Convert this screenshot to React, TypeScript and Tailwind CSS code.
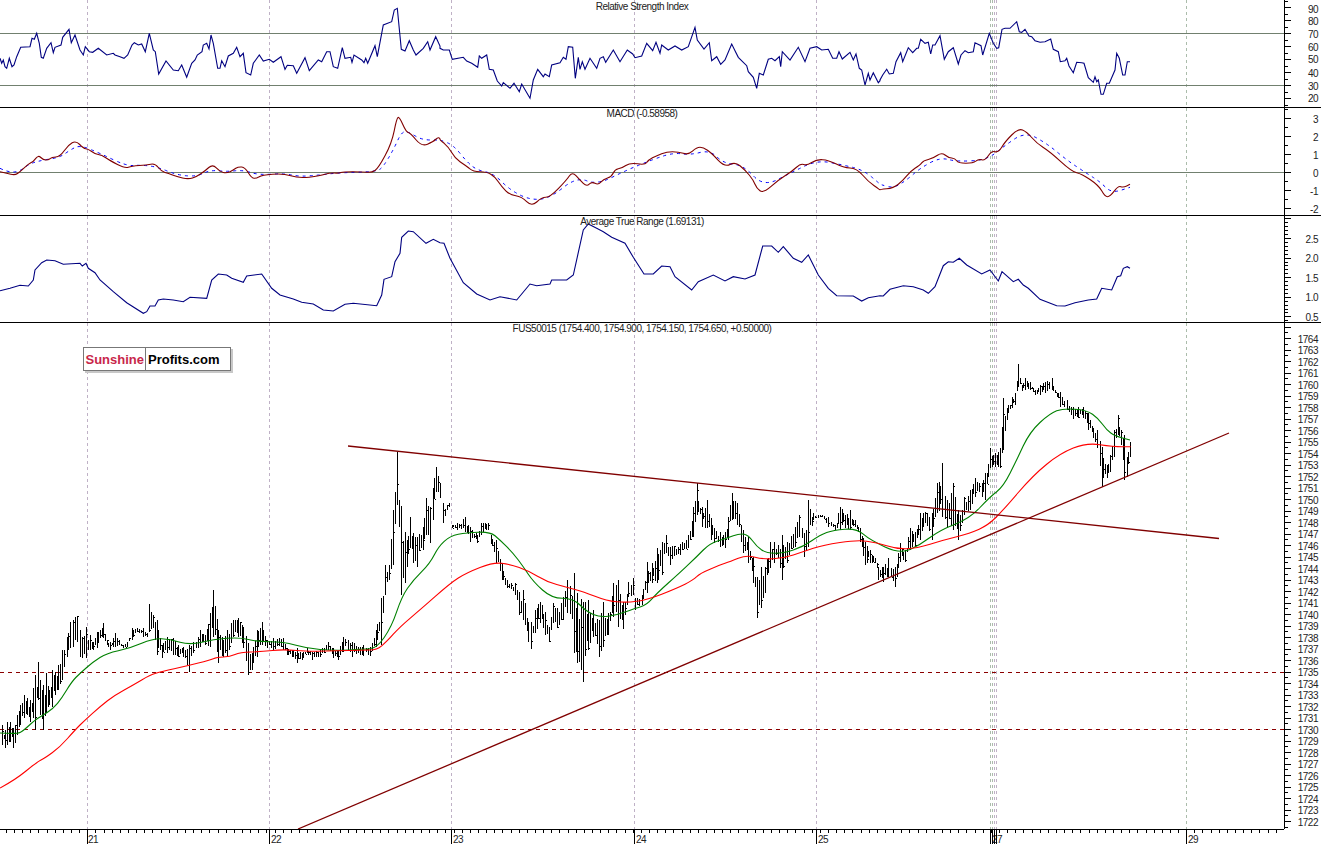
type Pt = [number, number];
type Bar = [number, number, number];

// traced from the chart at 3x, so every series is (offset + value / 3)
const toPts = (ox: number, oy: number, raw: number[]): Pt[] => {
  const out: Pt[] = [];
  for (let i = 0; i < raw.length; i += 2) out.push([ox + raw[i] / 3, oy + raw[i + 1] / 3]);
  return out;
};
const toLine = (pts: Pt[]) => pts.map((p) => `${p[0].toFixed(1)},${p[1].toFixed(1)}`).join(" ");
// rounds the corners of the slower series, each point becomes a quadratic control
const toCurve = (pts: Pt[]) => {
  let d = `M${pts[0][0].toFixed(1)} ${pts[0][1].toFixed(1)}`;
  for (let i = 1; i < pts.length - 1; i++) {
    const mx = (pts[i][0] + pts[i + 1][0]) / 2;
    const my = (pts[i][1] + pts[i + 1][1]) / 2;
    d += `Q${pts[i][0].toFixed(1)} ${pts[i][1].toFixed(1)} ${mx.toFixed(1)} ${my.toFixed(1)}`;
  }
  const last = pts[pts.length - 1];
  return `${d}L${last[0].toFixed(1)} ${last[1].toFixed(1)}`;
};
const toBars = (ox: number, oy: number, raw: number[]): Bar[] => {
  const out: Bar[] = [];
  for (let i = 0; i < raw.length; i += 3) out.push([ox + raw[i] / 3, oy + raw[i + 1] / 3, oy + raw[i + 2] / 3]);
  return out;
};

const rsi = toLine([
  ...toPts(0, 0, [0,175,5,190,10,180,15,200,20,205,28,175,36,200,42,195,50,170,62,142,90,140,96,115,103,118,110,100,118,130,124,172,130,175,140,145,153,128,160,158,165,142,183,135,188,112,207,88,214,128,225,105,240,150,250,165,256,140,268,155,278,157,295,145,320,165,340,160,345,165,360,170,372,175,383,165,396,135,403,128,415,135,425,132,436,155,448,100,460,150,466,155,476,222,498,183,520,210,535,212,545,195,560,232,575,190,585,180,592,165,606,155,610,135,620,130,627,147,633,105,640,130,653,205,660,205,665,182,675,200,685,168,700,160,710,142,720,170,730,160,738,218,752,225,760,190,778,165,790,183,808,178,820,187,843,170,855,208,862,196,880,197,890,220,915,173,928,212,955,180,965,185,980,155,990,155,1000,200,1013,205,1027,143,1035,175,1052,172,1056,187,1062,165,1085,180,1092,188,1097,175,1103,190,1125,137,1132,170,1150,75,1175,65,1183,30,1192,25,1204,148,1215,153,1228,122,1240,150,1248,165,1270,145,1283,125,1290,150,1307,110,1320,138]),
  ...toPts(440, 0, [0,145,10,150,28,150,37,178,70,172,80,183,95,190,113,202,118,168,125,175,140,165,148,208,160,210,172,243,185,258,190,248,210,265,222,250,238,275,245,252,270,295,280,240,293,208,310,230,315,222,328,230,335,195,360,188,370,172,378,178,385,140,398,142,406,235,415,172,420,208,427,185,435,208,450,175,470,205,480,175,490,170,497,187,520,150,540,185,562,150,578,162,585,173,605,168,620,130,638,152,648,127,660,160,665,135,685,150,705,138,725,150,745,140,765,82,772,120,792,147,808,128,815,182,830,170,842,193,855,180,875,132,885,152,895,172,920,197,925,215,940,232,950,265,958,220,970,225,985,178,995,175,1005,182,1018,170,1022,200,1027,155,1050,180,1075,142,1095,185,1110,145,1130,140,1145,150,1165,148,1178,175,1190,175,1197,155,1207,177,1230,157,1240,180,1248,162,1258,205,1265,210,1275,255,1285,220,1290,240,1300,218,1315,248,1320,242]),
  ...toPts(880, 0, [0,240,8,225,20,208,28,222,40,220,48,185,62,158,68,185,85,143,98,158,110,145,115,145,122,118,135,130,145,127,152,162,158,135,165,135,180,107,193,178,205,155,220,143,235,192,243,165,255,152,265,158,280,155,285,128,303,137,308,165,328,100,340,130,350,145,356,143,366,88,375,85,390,85,410,65,418,95,425,97,435,88,447,108,455,110,465,122,480,127,495,125,512,117,520,148,535,155,541,185,555,182,560,175,567,198,580,218,590,187,605,188,612,190,625,233,640,247,645,230,650,245,655,240,663,283,670,283,680,250,688,250,705,210,710,160,718,175,728,225,735,225,742,185,750,185]),
]);

const macd = toCurve([
  ...toPts(0, 0, [0,515,20,520,45,526,60,515,85,492,100,485,115,465,130,480,145,480,155,472,180,470,205,435,228,422,250,445,265,447,285,462,305,465,330,482,375,505,395,498,440,495,465,490,485,515,505,520,530,530,565,538,590,530,615,513,638,492,660,515,680,520,700,510,715,500,735,502,755,535,770,535,785,525,850,520,895,535,960,528,990,518,1015,520,1030,515,1085,515,1115,518,1135,505,1175,430,1190,355,1198,350,1218,395,1232,400,1265,440,1300,425,1313,412,1320,415]),
  ...toPts(440, 0, [0,420,25,440,45,475,75,495,100,515,140,515,165,530,185,560,210,585,245,590,275,620,305,592,330,592,380,540,397,515,420,540,440,560,455,545,475,555,490,538,515,530,525,508,545,505,570,488,615,495,625,480,650,467,680,455,715,455,745,465,770,442,790,442,815,460,855,502,885,485,915,510,940,540,950,565,970,580,1015,540,1055,515,1082,490,1100,497,1130,478,1165,480,1210,503,1250,505,1285,545,1320,570]),
  ...toPts(880, 0, [0,568,40,565,70,540,90,515,120,495,130,482,160,475,185,457,205,473,225,475,235,490,280,490,295,477,315,482,335,452,355,458,375,425,415,385,440,395,470,430,510,455,575,515,605,522,655,555,675,590,690,590,715,557,730,563,750,553]),
]);

const macdSignal = toCurve([
  ...toPts(0, 0, [0,505,20,515,55,517,90,490,130,480,180,472,210,450,240,435,300,460,380,498,420,495,470,500,530,525,590,530,630,510,680,515,730,510,775,525,850,520,900,530,960,525,1020,518,1130,515,1150,500,1180,450,1205,395,1225,395,1265,420,1320,420]),
  ...toPts(440, 0, [0,420,40,435,80,485,110,510,160,520,210,570,270,600,330,595,410,530,470,555,560,510,640,478,700,458,750,465,810,450,850,490,910,495,970,560,1050,520,1130,480,1210,495,1270,510,1320,552]),
  ...toPts(880, 0, [0,553,40,565,80,540,120,505,180,472,230,485,320,480,370,440,435,395,500,430,560,480,620,520,660,545,695,580,750,562]),
]);

const atr = toLine([
  ...toPts(0, 0, [0,872,30,865,60,856,85,858,100,840,105,810,125,788,140,780,165,782,190,793,240,790,247,798,258,790,265,805,285,818,300,840,340,875,380,908,430,940,440,935,450,918,465,918,475,900,490,897,520,900,550,905,570,892,620,895,635,840,655,822,680,825,695,835,730,847,740,828,785,822,815,865,840,885,880,897,905,907,940,912,970,930,1000,933,1035,913,1060,910,1130,917,1145,885,1152,838,1175,830,1185,785,1200,760,1205,712,1225,693,1240,695,1278,730,1300,718,1320,728]),
  ...toPts(440, 0, [0,728,12,730,30,775,70,848,110,882,150,900,180,890,230,900,270,852,290,857,330,852,335,840,380,840,400,825,430,690,445,672,470,685,490,695,515,712,555,730,580,772,612,822,640,822,665,798,690,800,705,830,755,870,775,845,820,825,855,843,880,830,915,837,945,825,968,738,995,738,1015,757,1030,740,1060,775,1085,787,1105,765,1135,825,1165,865,1190,887,1240,888,1265,903,1285,893,1320,887]),
  ...toPts(880, 0, [0,887,10,888,30,868,70,857,100,860,130,870,145,880,165,860,190,797,205,785,220,787,238,775,260,795,305,822,330,810,355,843,366,815,400,845,415,838,430,855,445,865,480,898,530,917,555,918,585,908,625,900,650,897,665,865,695,870,712,830,722,827,730,805,742,800,750,805]),
]);

const maRed = toCurve([
  [0,788],[15,780],[37,762],[45,758],[60,747],[75,730],
  ...toPts(0, 320, [255,1200,300,1160,345,1125,400,1095,450,1065,485,1055,560,1038,630,1020,650,1012,690,1010,720,997,785,995,850,988,930,995,1090,990]),
  ...toPts(360, 420, [50,690,80,665,120,620,180,570,270,490,320,458,400,427,450,433,505,452,560,485,620,502,670,515,740,543,800,548,860,540,950,505,1000,480,1020,460,1080,435,1110,425,1160,405]),
  ...toPts(740, 350, [70,628,130,625,190,605,250,585,350,570,410,577,470,597,530,595,610,570,690,550,745,525,790,480,880,375,960,310,1040,278,1120,290,1172,290]),
]);

const maGreen = toCurve([
  [0,733],[17,734],[23,731],[35,720],
  ...toPts(0, 320, [125,1188,160,1165,185,1135,215,1085,240,1060,280,1025,320,1000,390,985,460,955,510,958,570,975,640,958,720,952,770,965,850,965,920,985,1000,992,1090,988]),
  ...toPts(360, 420, [50,685,95,620,125,530,160,480,210,430,235,380,270,348,320,338,390,335,420,360,460,400,490,440,520,485,575,535,640,535,680,575,720,592,770,585,825,565,860,555,890,520,960,458,1010,410,1050,370,1100,355,1140,340,1165,345]),
  ...toPts(740, 350, [50,590,80,610,130,610,190,590,240,555,280,540,350,535,390,570,480,612,540,585,600,540,690,505,750,440,790,410,830,330,870,245,930,190,970,175,1040,180,1075,205,1100,240,1125,258,1170,270]),
]);

const keyBars: Bar[] = [
  [2,725,745],[5,730,748],[7,722,745],[10,722,742],[13,728,748],[15,725,743],[17,715,735],[20,705,725],[24,695,718],[27,698,715],[30,700,722],[33,688,718],[35,675,730],[38,662,700],[40,680,715],[43,685,730],[46,673,712],[49,690,705],[52,670,707],[55,672,695],[58,665,690],[62,650,680],
  ...toBars(0, 320, [200,950,1010,210,905,985,218,900,980,225,890,960,232,888,965,240,930,1010,245,950,1015,258,920,1015,270,945,990,280,965,990,290,935,985,300,930,955,310,910,955,320,960,975,330,965,990,345,940,980,357,960,975,368,975,985,380,965,980,395,925,960,410,925,935,430,925,950,440,940,950,448,853,935,458,885,925,470,900,1005,485,975,1015,500,950,1000,520,955,1005,535,975,1010,550,980,1010,567,975,1055,580,965,1000,600,930,980,615,945,975,630,880,980,640,810,950,655,930,1030,670,960,1010,680,930,1010,700,900,950,715,895,950,730,920,985,743,970,1065,755,1000,1050,770,930,1010,785,905,975,800,960,985,820,955,990,850,955,990,860,985,1005,875,990,1010,890,985,1030,905,1000,1020,920,985,1000,935,995,1020,960,990,1010,985,965,990,1000,985,1015,1015,990,1020,1030,950,990,1055,965,1010,1080,980,1005]),
  ...toBars(360, 420, [10,675,708,30,680,708,47,630,680,62,535,675,75,435,525,88,435,480,100,270,435,112,95,255,122,258,525,135,335,490,150,290,385,160,340,430,172,350,440,188,320,390,198,235,345,210,260,370,218,205,300,228,140,215,240,190,235,248,250,310,268,250,262,275,315,325,290,310,330,315,290,335,330,320,365,352,345,368,362,308,345,385,308,330,392,345,372,408,360,430,425,428,480,440,480,505,465,490,525,478,515,585,490,510,600,505,605,665,513,605,688,525,570,640,540,545,610,555,575,645,568,620,665,578,550,610,592,565,625,610,530,600,622,480,578,642,460,700,652,520,730,670,545,785,685,540,690,700,570,650,716,600,710,730,545,680,745,580,645,760,490,590,775,480,620,790,545,628,805,485,530,818,475,525,825,535,570,845,525,555,860,425,520,875,430,490,890,385,490,905,365,465,918,345,400,930,380,435,960,372,405,985,345,385,1000,260,350,1010,190,285,1025,260,320,1040,240,325,1052,295,360,1062,325,370,1080,335,380,1095,335,385,1105,290,360,1115,218,300,1130,250,315,1150,330,400,1165,350,430,1180,410,490,1192,470,595]),
  ...toBars(740, 350, [62,650,775,75,650,730,90,575,655,102,575,640,115,585,625,125,555,690,140,575,640,165,530,590,178,495,560,192,550,620,205,450,590,220,490,510,245,495,500,265,500,530,285,525,540,300,470,540,315,495,535,330,480,540,345,510,530,360,535,575,375,575,645,390,600,640,405,625,640,415,650,690,430,650,695,445,625,680,465,650,710,480,580,635,495,600,635,510,535,600,525,545,590,540,490,570,555,485,520,575,490,570,590,400,490,607,340,500,620,450,535,640,400,540,655,480,570,672,440,495,690,420,480,705,385,440,725,400,440,735,370,450,750,295,355,765,310,350,780,295,355,790,145,300,800,175,210,815,140,175,825,130,165,835,42,110,845,105,122,855,85,120,870,95,120,885,120,135,900,105,135,915,95,130,935,85,120,945,120,130,960,125,170,980,150,180,1000,170,208,1015,170,205,1030,170,205,1045,190,240,1060,235,265,1072,240,295,1085,290,410,1100,345,385,1110,315,365,1122,240,320,1133,195,255,1143,240,285,1152,255,390,1160,320,380,1170,275,320]),
];

const noise = (i: number) => {
  const v = Math.sin(i * 12.9898) * 43758.5453;
  return v - Math.floor(v);
};

// key bars are exact, the 15 minute bars in between are filled in from their neighbours
const buildBarsPath = () => {
  const all: Bar[] = [];
  keyBars.forEach((b, i) => {
    all.push(b);
    const next = keyBars[i + 1];
    if (!next) return;
    const gap = next[0] - b[0];
    const extra = Math.max(0, Math.round(gap / 2) - 1);
    for (let k = 1; k <= extra; k++) {
      const t = k / (extra + 1);
      const hi = b[1] + (next[1] - b[1]) * t;
      const lo = b[2] + (next[2] - b[2]) * t;
      const cut = (lo - hi) * 0.4;
      all.push([b[0] + gap * t, hi + cut * noise(i + k), lo - cut * noise(i * 3 + k)]);
    }
  });
  return all
    .map(([x, hi, lo], i) => {
      const px = Math.round(x);
      const stem = `M${px + 0.5} ${Math.round(hi)}V${Math.round(lo)}`;
      if (i % 2) return stem;
      const close = Math.round(hi + (lo - hi) * noise(i + 19));
      return `${stem}M${px + 1} ${close + 0.5}H${px + 2}`;
    })
    .join("");
};
const barsPath = buildBarsPath();

const gridLines = [
  { x: 87.5, green: false },
  { x: 269.5, green: false },
  { x: 451.5, green: false },
  { x: 634.5, green: false },
  { x: 816.5, green: false },
  { x: 990.5, green: true },
  { x: 992.5, green: true },
  { x: 994.5, green: false },
  { x: 996.5, green: false },
  { x: 1186.5, green: true },
];

type Tick = { y: number; major?: boolean; label?: string; labelY?: number };

function Pane({
  top,
  height,
  title,
  titleClass,
  ticks,
  children,
}: {
  top: number;
  height: number;
  title: string;
  titleClass?: string;
  ticks: Tick[];
  children: React.ReactNode;
}) {
  return (
    <div className="flex" style={{ height }}>
      <div className="relative w-[1284px]">
        <svg width="1284" height={height} viewBox={`0 ${top} 1284 ${height}`} className="block">
          {gridLines.map((g) => (
            <line
              key={g.x}
              x1={g.x}
              x2={g.x}
              y1={top}
              y2={top + height}
              stroke={g.green ? "#abbcab" : "#bfb1c6"}
              strokeDasharray="3 3"
              shapeRendering="crispEdges"
            />
          ))}
          {children}
        </svg>
        <div className={`absolute inset-x-0 top-0 flex justify-center text-[10px] leading-[12px] tracking-[-0.5px] text-[#222] ${titleClass ?? ""}`}>
          {title}
        </div>
      </div>
      <svg width="37" height={height} viewBox={`1284 ${top} 37 ${height}`} className="block">
        <line x1="1284.5" x2="1284.5" y1={top} y2={top + height} stroke="#000" shapeRendering="crispEdges" />
        {ticks.map((t, i) => (
          <g key={i}>
            <line
              x1="1285"
              x2={t.major ? 1291 : 1288}
              y1={Math.round(t.y) + 0.5}
              y2={Math.round(t.y) + 0.5}
              stroke="#000"
              shapeRendering="crispEdges"
            />
            {t.label && (
              <text x="1318" y={(t.labelY ?? t.y) + 3.5} textAnchor="end" className="fill-[#222] text-[10px] tracking-[-0.5px]">
                {t.label}
              </text>
            )}
          </g>
        ))}
      </svg>
    </div>
  );
}

const rsiLabels: Record<number, number> = { 90: 9.3, 80: 21.7, 70: 34.3, 60: 47.3, 50: 59.7, 40: 73.3, 30: 86.3, 20: 98.7 };
const rsiTicks: Tick[] = [];
for (let v = 95; v >= 15; v -= 5) {
  const major = v % 10 === 0;
  rsiTicks.push({ y: 33 + (70 - v) * 1.3, major, label: major ? String(v) : undefined, labelY: rsiLabels[v] });
}

const macdTicks: Tick[] = [];
for (let v = 3.5; v >= -2.5; v -= 0.5) {
  const major = Number.isInteger(v);
  macdTicks.push({ y: 172 + -v * 18, major, label: major ? String(v) : undefined, labelY: 173.3 - v * 18 });
}

const atrTicks: Tick[] = [];
for (let i = 30; i >= 4; i--) {
  const v = i / 10;
  const major = i % 5 === 0;
  atrTicks.push({
    y: 238 + (2.5 - v) * 39.2,
    major,
    label: major && i < 30 ? v.toFixed(1) : undefined,
    labelY: 239 + (2.5 - v) * 39.2,
  });
}

const mainTicks: Tick[] = [];
for (let v = 1765; v >= 1721.5; v -= 0.5) {
  const major = Number.isInteger(v);
  const y = 729 + (1730 - v) * 11.5;
  mainTicks.push({
    y,
    major,
    label: major && v <= 1764 && v >= 1722 ? String(v) : undefined,
    labelY: y + 1,
  });
}

const days = [
  { x: 87, label: "21", labelX: 88 },
  { x: 269, label: "22", labelX: 271 },
  { x: 451, label: "23", labelX: 453 },
  { x: 634, label: "24", labelX: 636 },
  { x: 816, label: "25", labelX: 818 },
  { x: 990, label: "27", labelX: 992 },
  { x: 1186, label: "29", labelX: 1188 },
];

function dateTicks() {
  const out: number[] = [];
  for (let x = 87.3 - 8.14 * 10; x < 1284; x += 8.14) out.push(Math.round(x));
  return out;
}

function DateAxis() {
  return (
    <div className="h-[15px] w-[1284px]">
      <svg width="1284" height="15" viewBox="0 829 1284 15" className="block">
        <line x1="0" x2="1284" y1="829.5" y2="829.5" stroke="#000" shapeRendering="crispEdges" />
        {dateTicks().map((x, i) => (
          <line key={i} x1={x + 0.5} x2={x + 0.5} y1="830" y2="833" stroke="#000" shapeRendering="crispEdges" />
        ))}
        {days.map((d) => (
          <text key={d.label} x={d.labelX} y="843" className="fill-[#222] text-[10px] tracking-[-0.5px]">
            {d.label}
          </text>
        ))}
        {[87, 269, 451, 634, 816, 990, 992, 994, 996, 1186].map((x) => (
          <line key={x} x1={x + 0.5} x2={x + 0.5} y1="830" y2="844" stroke="#000" shapeRendering="crispEdges" />
        ))}
      </svg>
    </div>
  );
}

export default function App() {
  return (
    <div className="h-[844px] w-[1321px] overflow-hidden bg-white font-['Liberation_Sans',Arial,sans-serif]">
      <div className="border-b border-black">
        <Pane top={0} height={107} title="Relative Strength Index" titleClass="pt-[1px]" ticks={rsiTicks}>
          <line x1="0" x2="1284" y1="33.5" y2="33.5" stroke="#71806f" shapeRendering="crispEdges" />
          <line x1="0" x2="1284" y1="85.5" y2="85.5" stroke="#71806f" shapeRendering="crispEdges" />
          <polyline points={rsi} fill="none" stroke="#000080" strokeWidth="1.1" />
        </Pane>
      </div>
      <div className="border-b border-black">
        <Pane top={108} height={107} title="MACD (-0.58958)" ticks={macdTicks}>
          <line x1="0" x2="1284" y1="172.5" y2="172.5" stroke="#71806f" shapeRendering="crispEdges" />
          <path d={macdSignal} fill="none" stroke="#0000ff" strokeWidth="1" strokeDasharray="3 4" />
          <path d={macd} fill="none" stroke="#800000" strokeWidth="1.1" />
        </Pane>
      </div>
      <div className="border-b border-black">
        <Pane top={216} height={106} title="Average True Range (1.69131)" ticks={atrTicks}>
          <polyline points={atr} fill="none" stroke="#000080" strokeWidth="1.1" />
        </Pane>
      </div>
      <div className="relative">
        <Pane top={323} height={506} title="FUS50015 (1754.400, 1754.900, 1754.150, 1754.650, +0.50000)" ticks={mainTicks}>
          <line x1="0" x2="1284" y1="672.5" y2="672.5" stroke="#8b0000" strokeDasharray="4 4" shapeRendering="crispEdges" />
          <line x1="0" x2="1284" y1="729.5" y2="729.5" stroke="#8b0000" strokeDasharray="4 4" shapeRendering="crispEdges" />
          <path d={barsPath} fill="none" stroke="#000" strokeWidth="1" shapeRendering="crispEdges" />
          <path d={maGreen} fill="none" stroke="#008000" strokeWidth="1.1" />
          <path d={maRed} fill="none" stroke="#ff0000" strokeWidth="1.1" />
          <line x1="348" y1="446" x2="1219" y2="538.5" stroke="#800000" strokeWidth="1.3" />
          <line x1="298" y1="829" x2="1229" y2="433" stroke="#800000" strokeWidth="1.3" />
        </Pane>
        <div className="absolute left-[83px] top-[24px] flex h-[24px] w-[148px] items-center border border-[#777] bg-white text-[13px] font-bold leading-none shadow-[2px_2px_0_#c8c8c8]">
          <span className="flex h-full w-[62px] items-center justify-end border-r border-[#777] pr-[1px] text-[#c8264a]">Sunshine</span>
          <span className="pl-[2px] text-black">Profits.com</span>
        </div>
      </div>
      <DateAxis />
    </div>
  );
}
